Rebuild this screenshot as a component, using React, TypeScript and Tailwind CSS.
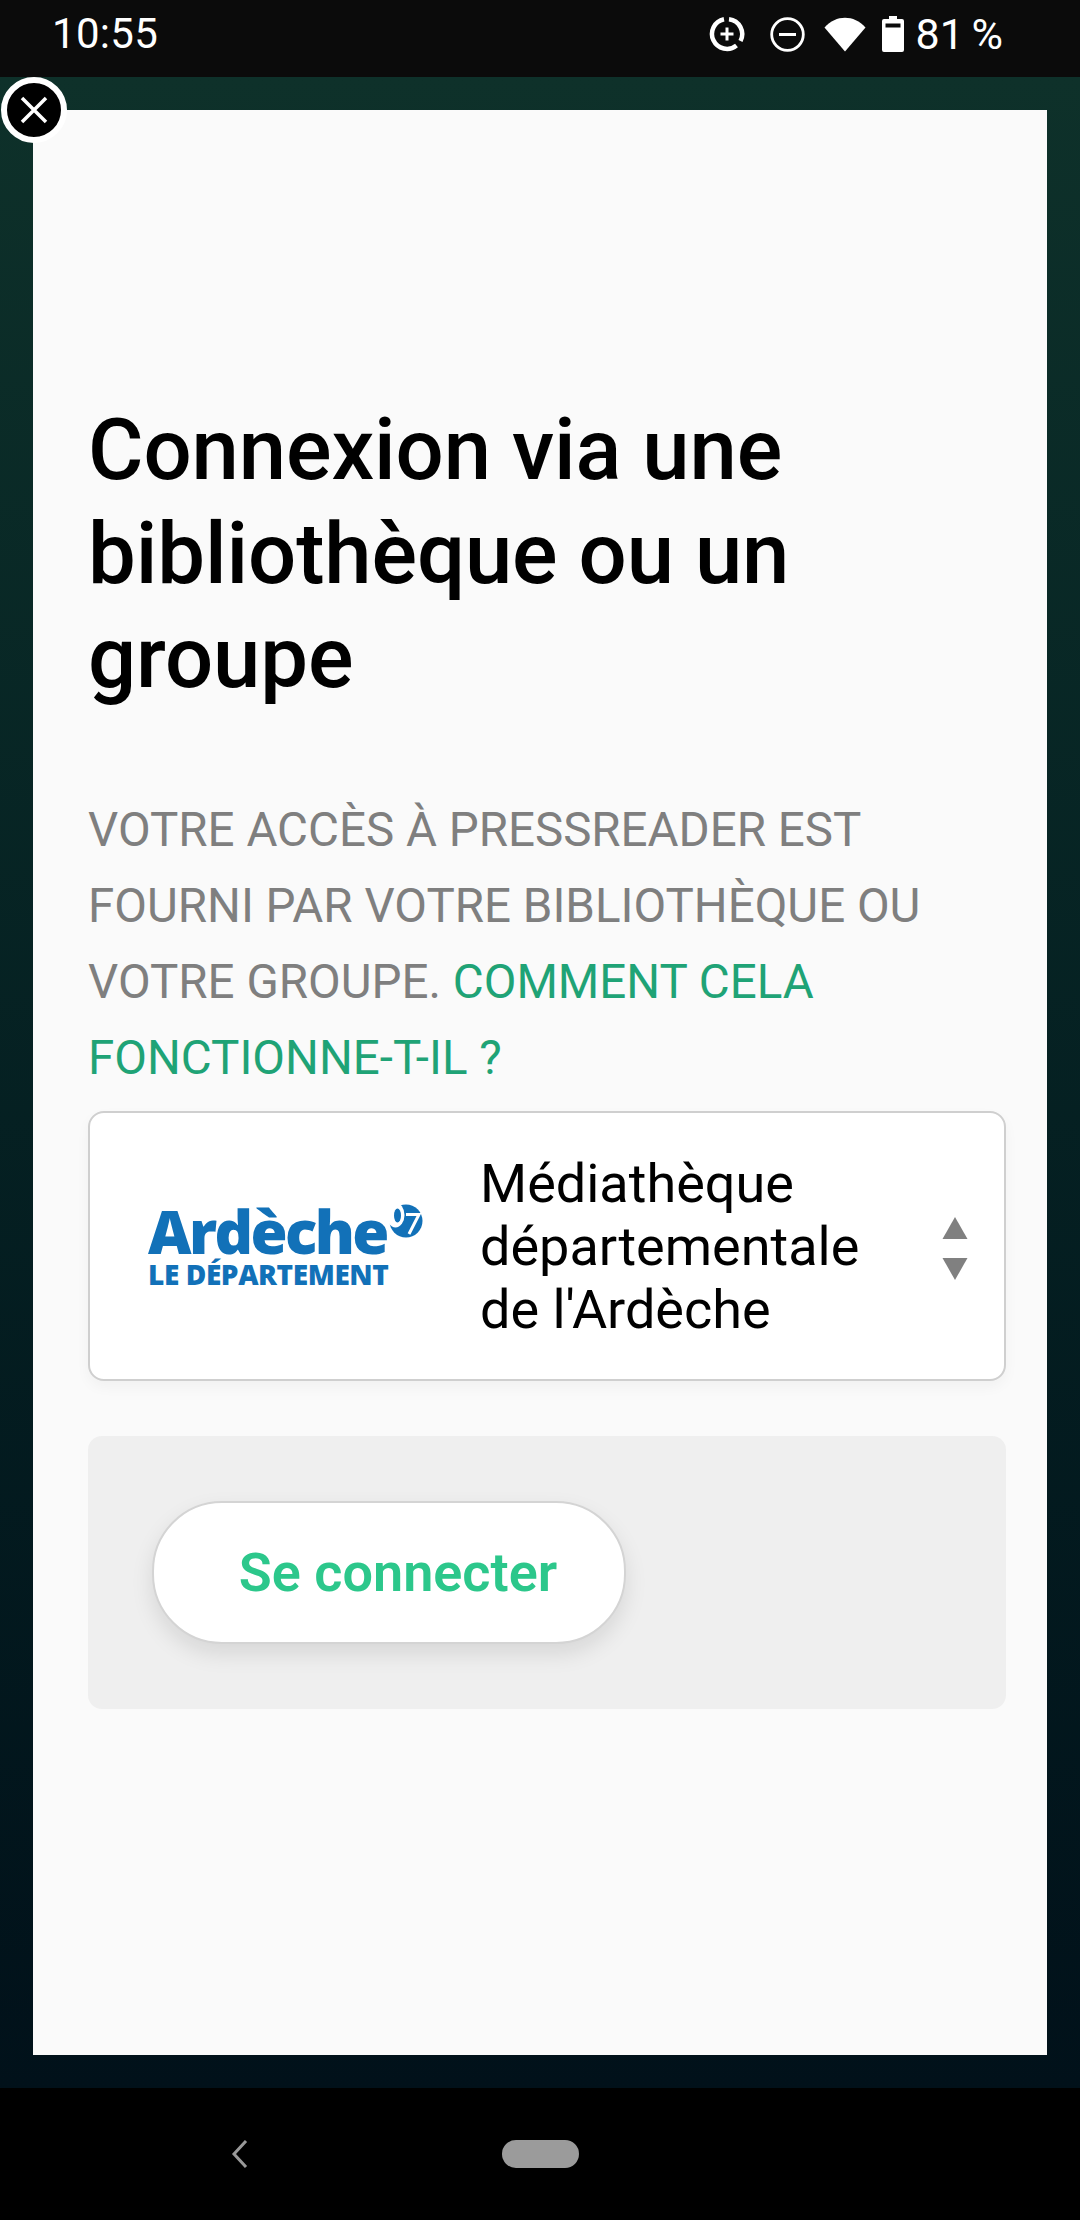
import React from 'react';

const roboto = 'font-[Roboto,sans-serif]';

const StatusIcons = () => (
  <div className="flex items-center">
    <svg width="36" height="36" viewBox="0 0 36 36" fill="none" className="mr-[25px]">
      <path d="M20 3.2A15 15 0 0 1 31.5 25M27.5 29.5A15 15 0 1 1 15 3.2" stroke="#fff" strokeWidth="4.5" />
      <path d="M18 11.5v13M11.5 18h13" stroke="#fff" strokeWidth="3" />
    </svg>
    <svg width="35" height="35" viewBox="0 0 35 35" fill="none" className="mr-[19px]">
      <circle cx="17.5" cy="17.5" r="15.8" stroke="#fff" strokeWidth="2.8" />
      <path d="M9 17.5h17" stroke="#fff" strokeWidth="3" />
    </svg>
    <svg width="42" height="35" viewBox="0 0 42 35" className="mr-[16px]">
      <path d="M0.5 10.5C12 -2.5 30 -2.5 41.500 10.500L21 34.500Z" fill="#fff" />
    </svg>
    <svg width="22" height="36" viewBox="0 0 22 36" className="mr-[12px]">
      <path fillRule="evenodd" d="M7 0h8v3h5a2 2 0 0 1 2 2v29a2 2 0 0 1-2 2H2a2 2 0 0 1-2-2V5a2 2 0 0 1 2-2h5ZM3.500 7.500v4h15v-4Z" fill="#fff" />
    </svg>
    <span className={`${roboto} text-[43px] leading-none text-white [word-spacing:-3px]`}>81 %</span>
  </div>
);

const Logo = () => (
  <div className="relative w-[276px] shrink-0 text-[#1271b8] font-['Open_Sans',sans-serif] font-extrabold">
    <div className="text-[60px] leading-[56px] tracking-[-2.6px] whitespace-nowrap">Ardèche</div>
    <div className="text-[28px] leading-[30px] tracking-[-0.4px] whitespace-nowrap">LE DÉPARTEMENT</div>
    {/* "07" ball next to the wordmark */}
    <svg width="36" height="36" viewBox="0 0 36 36" className="absolute left-[239px] top-0">
      <circle cx="19" cy="18" r="16.5" fill="#1271b8" />
      <ellipse cx="8.500" cy="12" rx="9" ry="12.500" fill="#fff" />
      <ellipse cx="10.500" cy="12.500" rx="3.500" ry="7" fill="#1271b8" />
      <path d="M19 11.500h13L22 31" fill="none" stroke="#fff" strokeWidth="3" />
    </svg>
  </div>
);

const App: React.FC = () => {
  return (
    <div className={`${roboto} w-[1080px] h-[2220px] flex flex-col overflow-hidden`}>
      <div className="h-[77px] shrink-0 bg-[#0b0b0b] flex items-center justify-between pl-[52px] pr-[77px] pb-[9px]">
        <span className="text-[42px] leading-none text-white tracking-[0.3px]">10:55</span>
        <StatusIcons />
      </div>

      <div className="relative flex-1 bg-linear-to-b from-[#0e312a] to-[#01111a] px-[33px] py-[33px] flex">
        <div className="absolute left-[1px] top-0 w-[66px] h-[66px] rounded-full bg-black border-[6px] border-white flex items-center justify-center">
          <svg width="28" height="28" viewBox="0 0 28 28" fill="none">
            <path d="M2 2l24 24M26 2L2 26" stroke="#fff" strokeWidth="3.500" />
          </svg>
        </div>

        <div className="flex-1 bg-[#fafafa] pt-[288px] pl-[55px] pr-[41px]">
          <h1 className="text-[85px] leading-[104px] font-medium text-black tracking-[-0.1px]">
            Connexion via une bibliothèque ou un groupe
          </h1>
          <p className="mt-[82px] text-[47.5px] leading-[76px] text-[#7f7f7f]">
            VOTRE ACCÈS À PRESSREADER EST FOURNI PAR VOTRE BIBLIOTHÈQUE OU VOTRE GROUPE.{' '}
            <span className="text-[#1fa376]">COMMENT CELA FONCTIONNE-T-IL ?</span>
          </p>

          <div className="mt-[15px] h-[270px] bg-white border-2 border-[#cfcfcf] rounded-[16px] shadow-[0_6px_14px_rgba(0,0,0,0.04)] flex items-center pl-[58px] pr-[36px]">
            <Logo />
            <div className="ml-[56px] flex-1 pr-[20px] text-[54px] leading-[63px] text-black">
              Médiathèque départementale de l'Ardèche
            </div>
            <svg width="26" height="64" viewBox="0 0 26 64" className="shrink-0 translate-y-[3px]">
              <path d="M13 0l12.500 22H.5Z" fill="#808080" />
              <path d="M.5 41h25L13 63Z" fill="#808080" />
            </svg>
          </div>

          <div className="mt-[55px] h-[273px] bg-[#efefef] rounded-[14px] pl-[64px] pt-[65px]">
            <div className="w-[474px] h-[143px] bg-white border-2 border-[#d4d4d4] rounded-[70px] shadow-[0_10px_22px_rgba(0,0,0,0.1)] flex items-center justify-center pl-[18px]">
              <span className="text-[54px] font-semibold text-[#2cc78b]">Se connecter</span>
            </div>
          </div>
        </div>
      </div>

      <div className="h-[132px] shrink-0 bg-black relative flex items-start justify-center pt-[52px]">
        <svg width="20" height="28" viewBox="0 0 20 28" fill="none" className="absolute left-[229px] top-[52px]">
          <path d="M17 1L5 14l12 13" stroke="#999" strokeWidth="3" />
        </svg>
        <div className="w-[77px] h-[28px] rounded-[14px] bg-[#9b9b9b]" />
      </div>
    </div>
  );
};

export default App;
